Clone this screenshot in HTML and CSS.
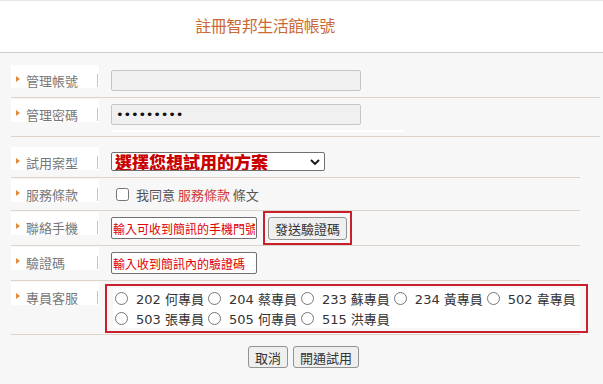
FILE: index.html
```html
<!DOCTYPE html>
<html lang="zh-Hant">
<head>
    <meta charset="UTF-8">
    <meta name="viewport" content="width=device-width, initial-scale=1.0">
    <title>註冊智邦生活館帳號</title>
    <link rel="stylesheet" href="styles.css">
</head>
<body>
    <header class="page-header">
        <h1 class="page-title">註冊智邦生活館帳號</h1>
    </header>

    <form class="signup" onsubmit="return false;">
        <div class="group group-account">
            <div class="row">
                <div class="row-label"><span class="mark"></span><span class="label-text">管理帳號</span><span class="sep"></span></div>
                <input class="field input-muted" type="text" disabled>
            </div>
            <div class="row row-password">
                <div class="row-label"><span class="mark"></span><span class="label-text">管理密碼</span><span class="sep"></span></div>
                <div class="field">
                    <input class="input-muted" type="password" value="123456789" readonly>
                    <div class="field-hint"></div>
                </div>
            </div>
        </div>

        <div class="group group-detail">
            <div class="row">
                <div class="row-label"><span class="mark"></span><span class="label-text">試用案型</span><span class="sep"></span></div>
                <div class="field select-wrap">
                    <select class="plan-select">
                        <option>選擇您想試用的方案</option>
                    </select>
                    <svg class="select-arrow" width="10" height="6" viewBox="0 0 10 6"><path d="M1 1l4 4 4-4" fill="none" stroke="#111" stroke-width="1.8"/></svg>
                </div>
            </div>
            <div class="row">
                <div class="row-label"><span class="mark"></span><span class="label-text">服務條款</span><span class="sep"></span></div>
                <label class="field terms">
                    <input type="checkbox">
                    <span>我同意 <a class="terms-link">服務條款</a> 條文</span>
                </label>
            </div>
            <div class="row row-tight">
                <div class="row-label"><span class="mark"></span><span class="label-text">聯絡手機</span><span class="sep"></span></div>
                <input class="field input-alert" type="text" value="輸入可收到簡訊的手機門號">
                <div class="send-wrap">
                    <button class="button" type="button">發送驗證碼</button>
                </div>
            </div>
            <div class="row">
                <div class="row-label"><span class="mark"></span><span class="label-text">驗證碼</span><span class="sep"></span></div>
                <input class="field input-alert" type="text" value="輸入收到簡訊內的驗證碼">
            </div>
            <div class="row row-agents">
                <div class="row-label"><span class="mark"></span><span class="label-text">專員客服</span><span class="sep"></span></div>
                <div class="agent-box">
                    <div class="agent-list">
                        <label class="agent"><input type="radio" name="agent"><span>202 何專員</span></label>
                        <label class="agent"><input type="radio" name="agent"><span>204 蔡專員</span></label>
                        <label class="agent"><input type="radio" name="agent"><span>233 蘇專員</span></label>
                        <label class="agent"><input type="radio" name="agent"><span>234 黃專員</span></label>
                        <label class="agent"><input type="radio" name="agent"><span>502 韋專員</span></label>
                        <label class="agent"><input type="radio" name="agent"><span>503 張專員</span></label>
                        <label class="agent"><input type="radio" name="agent"><span>505 何專員</span></label>
                        <label class="agent"><input type="radio" name="agent"><span>515 洪專員</span></label>
                    </div>
                </div>
            </div>
        </div>

        <div class="actions">
            <button class="button" type="button">取消</button>
            <button class="button" type="submit">開通試用</button>
        </div>
    </form>
</body>
</html>
```

FILE: styles.css
```css
:root {
    --page-bg: #f7f7f7;
    --line: #ddd3ca;
    --accent: #cc6a36;
    --mark: #e08b3c;
    --sep: #d5c1ab;
    --label: #777;
    --text: #333;
    --alert-red: #e00000;
    --box-red: #c8212c;
}

* {
    margin: 0;
    padding: 0;
    box-sizing: border-box;
}

body {
    background-color: var(--page-bg);
    font-family: "DejaVu Sans", "Noto Sans CJK TC", sans-serif;
    font-size: 13px;
    color: var(--text);
}

input,
select,
button {
    font-family: "DejaVu Sans", "Noto Sans CJK TC", sans-serif;
    font-size: 13px;
}

/* header */
.page-header {
    height: 53px;
    background: white;
    border-top: 1px solid #e6e6e6;
    border-bottom: 1px solid #cfcfcf;
}

.page-title {
    width: 530px;
    padding-top: 13px;
    text-align: center;
    font-family: "Noto Sans CJK TC", sans-serif;
    font-size: 16px;
    font-weight: 400;
    line-height: 22px;
    letter-spacing: -0.5px;
    color: var(--accent);
}

/* rows */
.group-account {
    margin: 0 3px 0 11px;
    padding-top: 12px;
}

.group-detail {
    margin: 0 23px 0 11px;
    padding-top: 10px;
}

.row {
    display: flex;
    align-items: flex-start;
    gap: 12px;
    padding-bottom: 6px;
    border-bottom: 1px solid var(--line);
}

.row + .row {
    margin-top: 1px;
}

.row-password {
    padding-bottom: 4px;
}

.row-tight {
    padding-bottom: 0;
}

.row-agents {
    padding-bottom: 1px;
}

.row-label {
    flex-shrink: 0;
    display: flex;
    align-items: flex-end;
    width: 88px;
    height: 23px;
    padding-left: 5px;
    background: white;
    color: var(--label);
    font-family: "Noto Sans CJK TC", sans-serif;
}

.mark {
    width: 0;
    height: 0;
    margin: 0 6px 6px 0;
    border-left: 4px solid var(--mark);
    border-top: 3px solid transparent;
    border-bottom: 3px solid transparent;
}

.label-text {
    line-height: 14px;
}

.sep {
    width: 1px;
    height: 13px;
    margin: 0 1px 1px auto;
    background: var(--sep);
}

.field {
    margin-top: 5px;
}

/* inputs */
.input-muted {
    display: block;
    width: 250px;
    height: 21px;
    padding: 0 4px;
    background: #f0f0f0;
    border: 1px solid #c6c6c6;
    border-radius: 2px;
    color: #111;
    font-size: 13px;
    letter-spacing: -0.2px;
}

.field-hint {
    width: 293px;
    height: 2px;
    margin-top: 5px;
    background: white;
}

.input-alert {
    width: 146px;
    height: 22px;
    padding: 0 1px;
    background: white;
    border: 1px solid #707070;
    border-radius: 2px;
    color: var(--alert-red);
    font-family: "Noto Sans CJK TC", sans-serif;
    font-size: 12px;
}

.select-wrap {
    position: relative;
}

.plan-select {
    display: block;
    width: 214px;
    height: 19px;
    padding: 0 3px;
    appearance: none;
    background: white;
    border: 1px solid #707070;
    border-radius: 2px;
    color: #c80000;
    font-family: "Noto Sans CJK TC", sans-serif;
    font-size: 17px;
    font-weight: 900;
    line-height: 17px;
}

.select-arrow {
    position: absolute;
    top: 7px;
    right: 5px;
}

/* terms */
.terms {
    display: flex;
    align-items: center;
    height: 20px;
    color: #555;
    font-family: "Noto Sans CJK TC", sans-serif;
}

.terms input {
    width: 13px;
    height: 13px;
    margin: 0 7px 0 5px;
}

.terms-link {
    color: #d03a3a;
}

/* buttons */
.button {
    height: 23px;
    padding: 0 6px;
    background: #efefef;
    border: 1px solid #939393;
    border-radius: 3px;
    color: var(--text);
    font-family: "Noto Sans CJK TC", sans-serif;
    cursor: pointer;
}

.send-wrap {
    flex-shrink: 0;
    height: 34px;
    margin: -1px 0 0 -6px;
    padding: 4px 3px 3px;
    border: 2px solid var(--box-red);
}

/* agents */
.agent-box {
    flex-shrink: 0;
    width: 483px;
    margin: 2px 0 0 -6px;
    padding: 2px 6px 3px;
    border: 2px solid var(--box-red);
}

.agent-list {
    display: grid;
    grid-template-columns: repeat(5, auto);
    grid-auto-rows: 20px;
    justify-content: start;
    column-gap: 4px;
    height: 40px;
    padding-left: 2px;
    background: white;
    white-space: nowrap;
}

.agent {
    display: flex;
    align-items: center;
}

.agent input {
    width: 13px;
    height: 13px;
    margin: 0 8px 0 0;
}

/* actions */
.actions {
    display: flex;
    justify-content: center;
    gap: 5px;
    margin-top: 11px;
    padding-left: 4px;
}

.actions .button {
    height: 22px;
}
```
